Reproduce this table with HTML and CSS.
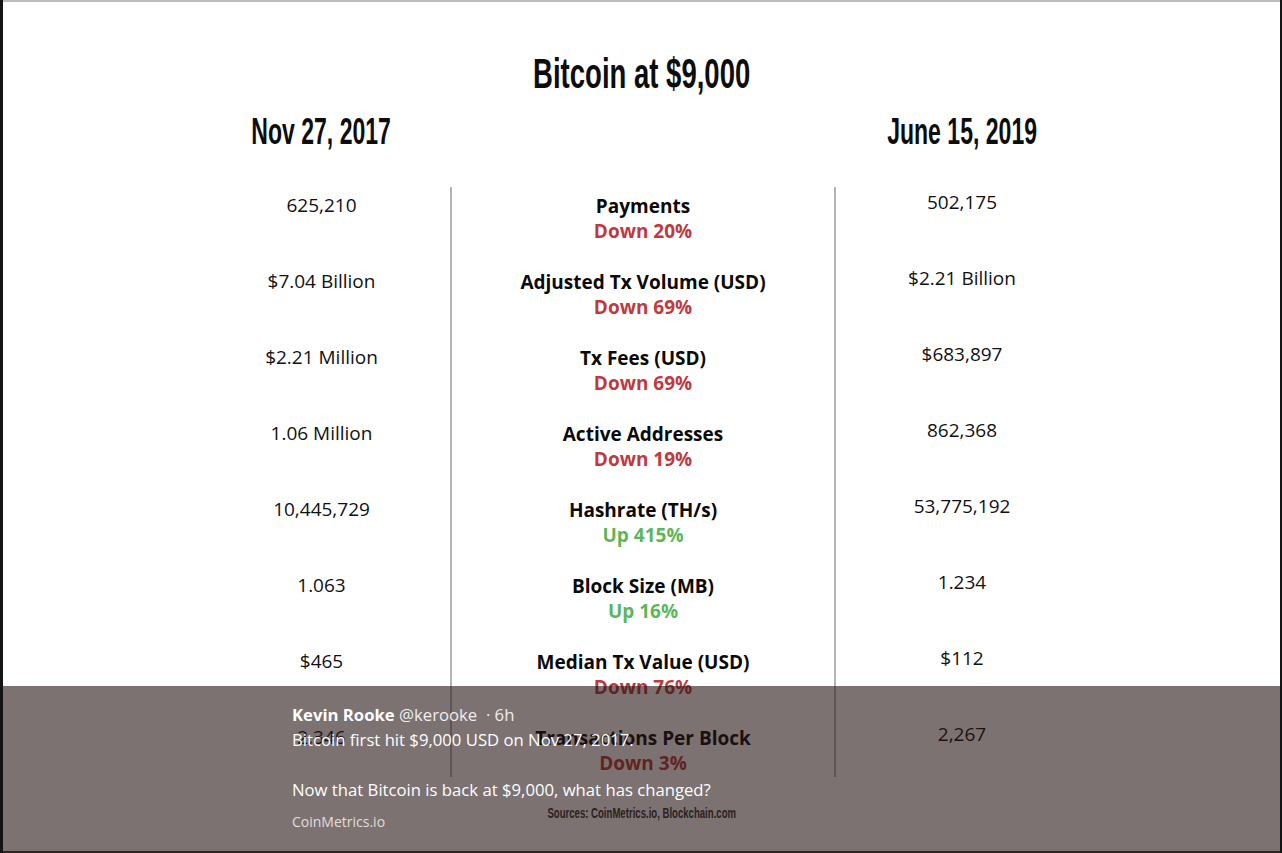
FILE: index.html
```html
<!DOCTYPE html>
<html lang="en">
<head>
<meta charset="utf-8">
<title>Bitcoin at $9,000</title>
<link rel="stylesheet" href="styles.css">
</head>
<body>
<div class="frame">
  <h1 class="title"><span class="cond">Bitcoin at $9,000</span></h1>
  <div class="row dates">
    <div class="date"><span class="cond">Nov 27, 2017</span></div>
    <div class="date-gap"></div>
    <div class="date"><span class="cond">June 15, 2019</span></div>
  </div>
  <div class="table">
    <div class="row">
      <div class="old">625,210</div>
      <div class="mid"><div class="label">Payments</div><div class="chg down">Down 20%</div></div>
      <div class="new">502,175</div>
    </div>
    <div class="row">
      <div class="old">$7.04 Billion</div>
      <div class="mid"><div class="label">Adjusted Tx Volume (USD)</div><div class="chg down">Down 69%</div></div>
      <div class="new">$2.21 Billion</div>
    </div>
    <div class="row">
      <div class="old">$2.21 Million</div>
      <div class="mid"><div class="label">Tx Fees (USD)</div><div class="chg down">Down 69%</div></div>
      <div class="new">$683,897</div>
    </div>
    <div class="row">
      <div class="old">1.06 Million</div>
      <div class="mid"><div class="label">Active Addresses</div><div class="chg down">Down 19%</div></div>
      <div class="new">862,368</div>
    </div>
    <div class="row">
      <div class="old">10,445,729</div>
      <div class="mid"><div class="label">Hashrate (TH/s)</div><div class="chg up">Up 415%</div></div>
      <div class="new">53,775,192</div>
    </div>
    <div class="row">
      <div class="old">1.063</div>
      <div class="mid"><div class="label">Block Size (MB)</div><div class="chg up">Up 16%</div></div>
      <div class="new">1.234</div>
    </div>
    <div class="row">
      <div class="old">$465</div>
      <div class="mid"><div class="label">Median Tx Value (USD)</div><div class="chg down">Down 76%</div></div>
      <div class="new">$112</div>
    </div>
    <div class="row">
      <div class="old">2,346</div>
      <div class="mid"><div class="label">Transactions Per Block</div><div class="chg down">Down 3%</div></div>
      <div class="new">2,267</div>
    </div>
  </div>
  <div class="sources"><span class="cond src">Sources: CoinMetrics.io, Blockchain.com</span></div>

  <div class="overlay">
    <div class="tweet-head"><span class="name">Kevin Rooke</span> <span class="handle">@kerooke</span> <span class="time">&nbsp;· 6h</span></div>
    <div class="tweet-line">Bitcoin first hit $9,000 USD on Nov 27, 2017.</div>
    <div class="tweet-line blank">&nbsp;</div>
    <div class="tweet-line">Now that Bitcoin is back at $9,000, what has changed?</div>
    <div class="tweet-source">CoinMetrics.io</div>
  </div>
</div>
</body>
</html>
```
FILE: styles.css
```css
html, body {
  margin: 0;
  padding: 0;
}
body {
  width: 1282px;
  height: 853px;
  overflow: hidden;
  background: #141414;
  font-family: "Open Sans", "Noto Sans", sans-serif;
  color: #111;
}
.frame {
  position: relative;
  box-sizing: border-box;
  margin-left: 3px;
  width: 1277px;
  height: 853px;
  background: #fff;
  border-top: 2px solid #bdbdbd;
  border-bottom: 2px solid #2d2422;
}
.cond {
  display: inline-block;
  transform: scaleX(0.64);
  transform-origin: 50% 50%;
  white-space: nowrap;
}
.title {
  margin: 50px 0 0;
  text-align: center;
  font-family: "Liberation Sans", Arial, sans-serif;
  font-weight: 700;
  font-size: 43px;
  line-height: 43px;
  color: #0d0d0d;
}
.row {
  display: grid;
  grid-template-columns: 257px 386px 252px;
  margin-left: 190px;
}
.dates {
  margin-top: 19px;
}
.date {
  text-align: center;
  font-family: "Liberation Sans", Arial, sans-serif;
  font-weight: 700;
  font-size: 36px;
  line-height: 36px;
  color: #0d0d0d;
}
.table {
  margin-top: 37px;
}
.old, .new {
  text-align: center;
  font-size: 19px;
  line-height: 25px;
  color: #111;
}
.old {
  padding-top: 6px;
}
.new {
  padding-top: 3px;
}
.mid {
  border-left: 2px solid #b4b4b4;
  border-right: 2px solid #b4b4b4;
  padding: 7px 0 19px;
  text-align: center;
  font-weight: 700;
  font-size: 19px;
  line-height: 25px;
}
.row:last-child .mid {
  padding-bottom: 1px;
}
.label {
  color: #0a0a0a;
}
.down {
  color: #bf3a3c;
}
.up {
  color: #5db65a;
}
.sources {
  margin-top: 29px;
  text-align: center;
  font-family: "Liberation Sans", Arial, sans-serif;
  font-weight: 700;
  font-size: 14px;
  line-height: 14px;
  color: #333;
}
.src {
  transform: scaleX(0.685);
}
.overlay {
  position: absolute;
  left: 0;
  right: 0;
  top: 684px;
  bottom: 0;
  background: rgba(36, 20, 18, 0.6);
  padding: 16px 0 0 289px;
  color: #fff;
  font-family: "Open Sans", "Noto Sans", sans-serif;
  font-size: 16.7px;
  line-height: 25px;
}
.name {
  font-weight: 700;
}
.handle, .time {
  color: #f0eded;
}
.tweet-source {
  margin-top: 10px;
  font-size: 14px;
  line-height: 20px;
  color: #e2dddc;
}
```
